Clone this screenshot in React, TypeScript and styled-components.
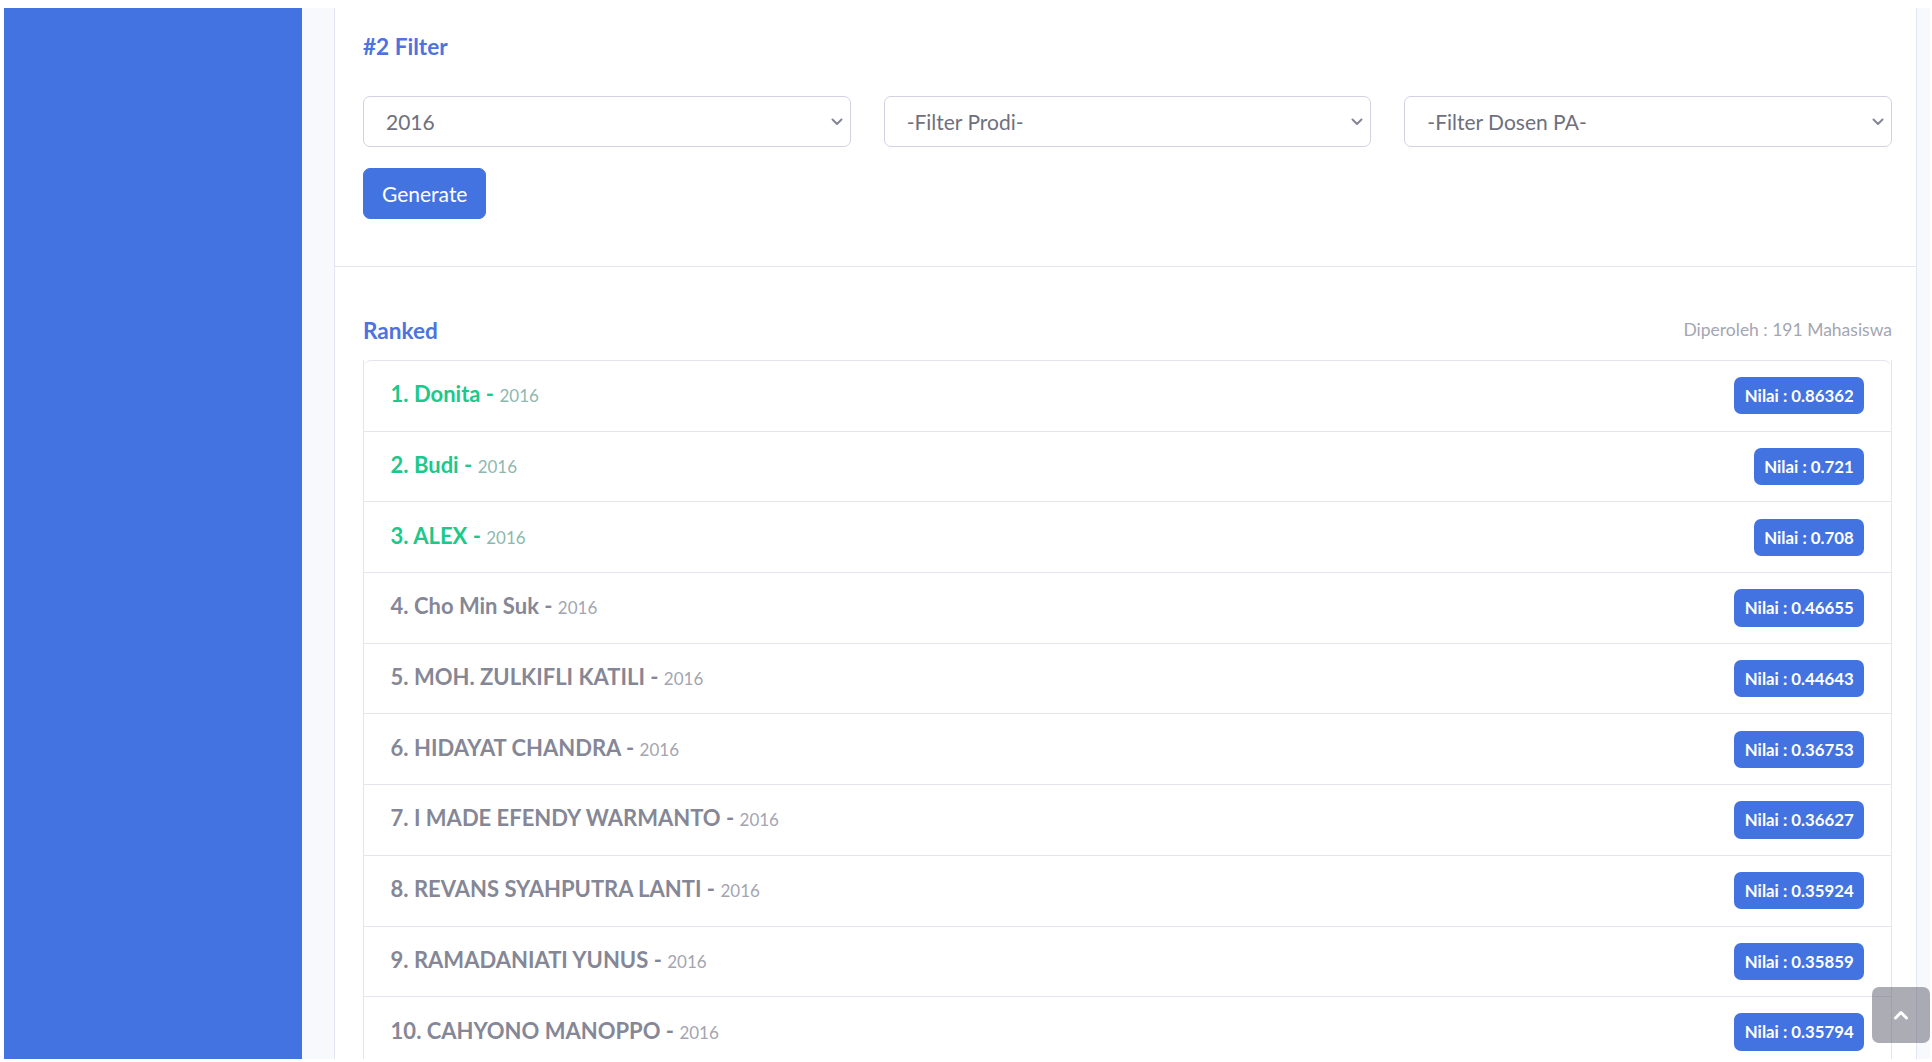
import React from "react";
import styled, { createGlobalStyle } from "styled-components";

const Global = createGlobalStyle`
  html, body { margin: 0; padding: 0; background: #ffffff; }
  body { font-family: Lato, "Noto Sans", sans-serif; }
  * { box-sizing: border-box; }
`;

const Frame = styled.div`
  display: flex;
  height: 1062px;
  padding: 8px 2px 3px 4px;
  overflow: hidden;
`;

const Sidebar = styled.aside`
  width: 298px;
  flex-shrink: 0;
  background: #4373e0;
`;

const Main = styled.main`
  flex: 1;
  display: flex;
  background: #f8f9fc;
  padding: 0 13px 0 32px;
  overflow: hidden;
`;

const Card = styled.section`
  flex: 1;
  display: flex;
  flex-direction: column;
  background: #ffffff;
  border-left: 1px solid #e3e6f0;
  border-right: 1px solid #e3e6f0;
  overflow: hidden;
`;

const FilterSection = styled.div`
  padding: 26px 24px 47px 28px;
  border-bottom: 1px solid #e3e6f0;
`;

const Title = styled.h6`
  margin: 0;
  font-size: 22.6px;
  line-height: 26px;
  font-weight: 700;
  color: #4e73df;
`;

const FilterRow = styled.div`
  display: grid;
  grid-template-columns: repeat(3, 1fr);
  column-gap: 33px;
  margin-top: 36px;
`;

const SelectWrap = styled.div`
  position: relative;
`;

const Select = styled.select`
  width: 100%;
  height: 51px;
  appearance: none;
  -webkit-appearance: none;
  border: 1px solid #d1d3e2;
  border-radius: 7px;
  background: #ffffff;
  color: #6e707e;
  font-family: inherit;
  font-size: 21px;
  padding: 0 40px 0 22px;
  outline: none;
`;

const Chevron = styled.svg`
  position: absolute;
  right: 8px;
  top: 50%;
  transform: translateY(-50%);
  pointer-events: none;
`;

const Button = styled.button`
  margin-top: 21px;
  height: 51px;
  padding: 0 18px;
  border: 1px solid #4373e0;
  border-radius: 7px;
  background: #4373e0;
  color: #ffffff;
  font-family: inherit;
  font-size: 21px;
  cursor: pointer;
`;

const RankSection = styled.div`
  padding: 51px 24px 0 28px;
`;

const RankHeader = styled.div`
  display: flex;
  justify-content: space-between;
  align-items: center;
`;

const Count = styled.span`
  font-size: 17.5px;
  color: #a4a6b2;
  margin-bottom: 4px;
`;

const List = styled.ul`
  list-style: none;
  margin: 16px 0 0;
  padding: 0;
  border-left: 1px solid #e3e6f0;
  border-right: 1px solid #e3e6f0;
`;

const Row = styled.li`
  display: flex;
  align-items: center;
  justify-content: space-between;
  height: 70.7px;
  padding: 0 26.6px;
  border-top: 1px solid #e3e6f0;
  &:first-child {
    border-radius: 7px 7px 0 0;
  }
`;

const Name = styled.span<{ $top: boolean }>`
  font-size: 22px;
  font-weight: 700;
  margin-bottom: 4px;
  color: ${(p) => (p.$top ? "#1cc88a" : "#858796")};
`;

const Year = styled.small<{ $top: boolean }>`
  font-size: 17px;
  font-weight: 400;
  color: ${(p) => (p.$top ? "#8db8b0" : "#a3a5b1")};
`;

const Badge = styled.span`
  display: inline-block;
  height: 37.3px;
  line-height: 37.3px;
  padding: 0 10.7px;
  border-radius: 7px;
  background: #4373e0;
  color: #ffffff;
  font-size: 16.8px;
  font-weight: 700;
  white-space: nowrap;
`;

const ScrollTop = styled.a`
  position: fixed;
  right: 2px;
  bottom: 19px;
  width: 58px;
  height: 56px;
  border-radius: 7px;
  background: rgba(90, 92, 105, 0.5);
  display: flex;
  align-items: center;
  justify-content: center;
`;

const students = [
  { name: "Donita", score: "0.86362" },
  { name: "Budi", score: "0.721" },
  { name: "ALEX", score: "0.708" },
  { name: "Cho Min Suk", score: "0.46655" },
  { name: "MOH. ZULKIFLI KATILI", score: "0.44643" },
  { name: "HIDAYAT CHANDRA", score: "0.36753" },
  { name: "I MADE EFENDY WARMANTO", score: "0.36627" },
  { name: "REVANS SYAHPUTRA LANTI", score: "0.35924" },
  { name: "RAMADANIATI YUNUS", score: "0.35859" },
  { name: "CAHYONO MANOPPO", score: "0.35794" },
];

const ChevronDown = () => (
  <Chevron width="12" height="8" viewBox="0 0 12 8">
    <path d="M1.5 1.5 L6 6 L10.5 1.5" fill="none" stroke="#858796" strokeWidth="2" strokeLinecap="round" strokeLinejoin="round" />
  </Chevron>
);

const FilterSelect = ({ options }: { options: string[] }) => (
  <SelectWrap>
    <Select defaultValue={options[0]}>
      {options.map((o) => (
        <option key={o}>{o}</option>
      ))}
    </Select>
    <ChevronDown />
  </SelectWrap>
);

export default function App() {
  return (
    <>
      <Global />
      <Frame>
        <Sidebar />
        <Main>
          <Card>
            <FilterSection>
              <Title>#2 Filter</Title>
              <FilterRow>
                <FilterSelect options={["2016", "2017", "2018"]} />
                <FilterSelect options={["-Filter Prodi-"]} />
                <FilterSelect options={["-Filter Dosen PA-"]} />
              </FilterRow>
              <Button>Generate</Button>
            </FilterSection>
            <RankSection>
              <RankHeader>
                <Title>Ranked</Title>
                <Count>Diperoleh : 191 Mahasiswa</Count>
              </RankHeader>
              <List>
                {students.map((s, i) => (
                  <Row key={s.name}>
                    <Name $top={i < 3}>
                      {i + 1}. {s.name} - <Year $top={i < 3}>2016</Year>
                    </Name>
                    <Badge>Nilai : {s.score}</Badge>
                  </Row>
                ))}
              </List>
            </RankSection>
          </Card>
        </Main>
      </Frame>
      <ScrollTop href="#">
        <svg width="16" height="10" viewBox="0 0 16 10">
          <path d="M2.5 8 L8 2.5 L13.5 8" fill="none" stroke="#ffffff" strokeWidth="3" strokeLinecap="round" strokeLinejoin="round" />
        </svg>
      </ScrollTop>
    </>
  );
}
